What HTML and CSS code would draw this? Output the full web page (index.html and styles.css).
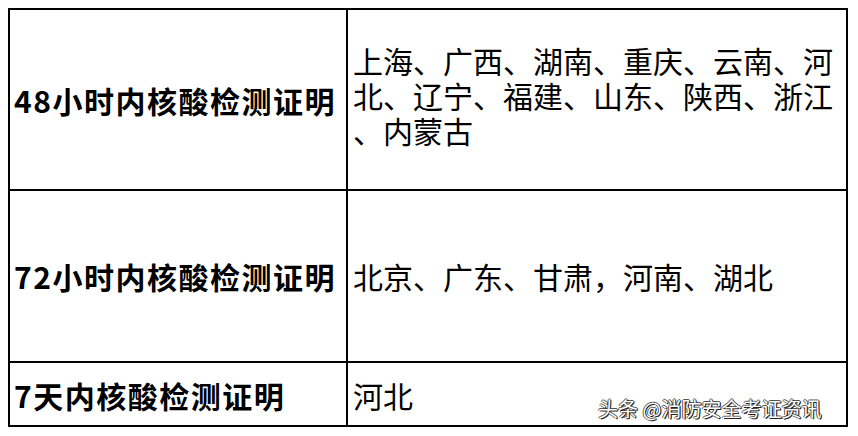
FILE: index.html
```html
<!DOCTYPE html>
<html lang="zh">
<head>
<meta charset="utf-8">
<link rel="stylesheet" href="styles.css">
</head>
<body>
<div class="page">
  <table class="cert">
    <tr class="row-a">
      <td class="label">48小时内核酸检测证明</td>
      <td class="regions">上海、广西、湖南、重庆、云南、河北、辽宁、福建、山东、陕西、浙江、内蒙古</td>
    </tr>
    <tr class="row-b">
      <td class="label">72小时内核酸检测证明</td>
      <td class="regions">北京、广东、甘肃，河南、湖北</td>
    </tr>
    <tr class="row-c">
      <td class="label">7天内核酸检测证明</td>
      <td class="regions">河北</td>
    </tr>
  </table>
  <div class="watermark">头条 @消防安全考证资讯</div>
</div>
</body>
</html>
```

FILE: styles.css
```css
html, body {
  margin: 0;
  padding: 0;
  background: #fff;
}
body {
  width: 858px;
  height: 436px;
  overflow: hidden;
}
.page {
  position: relative;
  padding: 8px 0 0 8px;
  width: 858px;
  height: 436px;
  box-sizing: border-box;
}
.cert {
  border-collapse: collapse;
  width: 840px;
  table-layout: fixed;
  font-family: "Noto Sans CJK SC", "Noto Sans", sans-serif;
  color: #000;
}
.cert td {
  border: 2px solid #000;
  vertical-align: middle;
  padding: 0;
}
.label {
  width: 332px;
  font-size: 30px;
  font-weight: bold;
  letter-spacing: 1.5px;
  padding-left: 4px !important;
  white-space: nowrap;
  line-height: 34px;
}
.regions {
  font-size: 30px;
  line-height: 35px;
  padding: 0 6px 0 5px !important;
  line-break: anywhere;
  word-break: break-all;
}
.row-a { height: 181px; }
.row-b { height: 172px; }
.row-c { height: 64px; }
.row-a .regions { padding-bottom: 8px !important; }
.row-c td { padding-top: 2px !important; }
.watermark {
  position: absolute;
  left: 598px;
  top: 395px;
  font-family: "Noto Sans CJK SC", sans-serif;
  font-size: 20px;
  line-height: 28px;
  color: #fff;
  text-shadow: 1px 1px 0 #222, -1px 0 0 #555, 0 -1px 0 #555, 1px 0 0 #333;
  white-space: nowrap;
}
```
